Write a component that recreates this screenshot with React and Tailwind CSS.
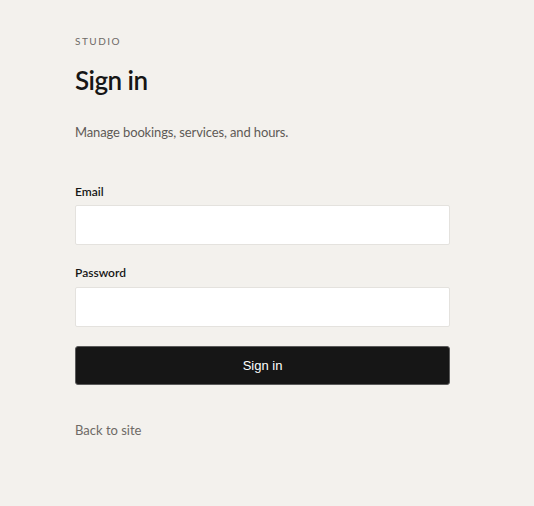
import React from 'react';

const App = () => {
  return (
    <div className="min-h-screen w-full bg-[#f3f1ed] font-['Lato','Noto_Sans',sans-serif]">
      <main className="ml-[75px] w-[375px] pt-[34px]">
        {/* Header */}
        <p className="text-[10px] leading-[14px] tracking-[0.15em] text-[#6e6a66]">STUDIO</p>
        <h1 className="mt-[14px] text-[26px] leading-[36px] font-semibold tracking-[-0.02em] text-[#161616]">
          Sign in
        </h1>
        <p className="mt-[24px] text-[13px] leading-[20px] tracking-[-0.01em] text-[#5e5a56]">
          Manage bookings, services, and hours.
        </p>

        {/* Form */}
        <form className="mt-[42px]" onSubmit={(e) => e.preventDefault()}>
          <label className="block">
            <span className="block text-[12px] leading-[16px] font-semibold text-[#161616]">Email</span>
            <input
              type="email"
              className="mt-[5px] block h-[40px] w-full rounded-[2px] border border-[#e4e2de] bg-white px-3 text-sm outline-none"
            />
          </label>
          <label className="mt-[20px] block">
            <span className="block text-[12px] leading-[16px] font-semibold text-[#161616]">Password</span>
            <input
              type="password"
              className="mt-[6px] block h-[40px] w-full rounded-[2px] border border-[#e4e2de] bg-white px-3 text-sm outline-none"
            />
          </label>
          <button
            type="submit"
            className="mt-[19px] block h-[39px] w-full rounded-[3px] border border-[#5a5a5a] bg-[#161616] font-['Liberation_Sans',Arial,sans-serif] text-[13px] text-white"
          >
            Sign in
          </button>
        </form>

        <a href="#" className="mt-[35px] block text-[13px] leading-[20px] text-[#6e6a66]">
          Back to site
        </a>
      </main>
    </div>
  );
};

export default App;
